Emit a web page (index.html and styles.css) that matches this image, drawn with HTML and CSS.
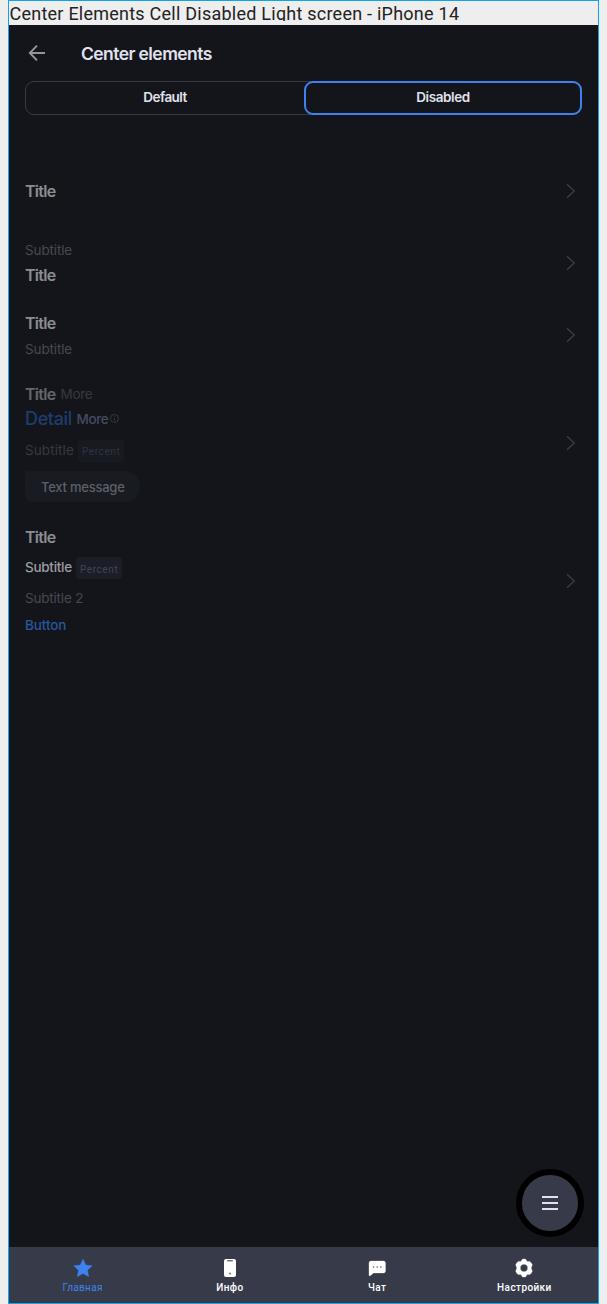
FILE: index.html
```html
<!DOCTYPE html>
<html lang="ru">
<head>
<meta charset="utf-8">
<title>Center elements</title>
<link rel="stylesheet" href="styles.css">
</head>
<body>
<main class="frame">
  <div class="caption">Center Elements Cell Disabled Light screen - iPhone 14</div>
  <section class="screen">
    <header class="header">
      <svg class="back" width="18" height="18" viewBox="0 0 18 18"><path d="M17 9H2M9 1.7 1.8 9 9 16.3"/></svg>
      <h1 class="heading">Center elements</h1>
    </header>
    <nav class="tabs">
      <div class="tab">Default</div>
      <div class="tab tab-active">Disabled</div>
    </nav>
    <div class="cells">
      <article class="cell">
        <div class="body"><div class="line"><span class="title">Title</span></div></div>
        <svg class="chevron" width="10" height="16" viewBox="0 0 10 16"><path d="M1 1.3 8.2 8 1 14.7"/></svg>
      </article>
      <article class="cell">
        <div class="body"><div class="line line-over"><span class="subtitle">Subtitle</span></div><div class="line"><span class="title">Title</span></div></div>
        <svg class="chevron" width="10" height="16" viewBox="0 0 10 16"><path d="M1 1.3 8.2 8 1 14.7"/></svg>
      </article>
      <article class="cell">
        <div class="body"><div class="line"><span class="title">Title</span></div><div class="line line-sub"><span class="subtitle">Subtitle</span></div></div>
        <svg class="chevron" width="10" height="16" viewBox="0 0 10 16"><path d="M1 1.3 8.2 8 1 14.7"/></svg>
      </article>
      <article class="cell cell-rich">
        <div class="body">
          <div class="line line-top"><span class="title title-dim">Title</span><span class="more">More</span></div>
          <div class="line line-detail"><span class="detail">Detail</span><span class="detail-more">More</span><svg class="info" width="9" height="9" viewBox="0 0 9 9"><circle cx="4.5" cy="4.5" r="4"/><path d="M4.5 4v2.7M4.5 2.3v.8"/></svg></div>
          <div class="line line-percent"><span class="subtitle subtitle-dim">Subtitle</span><span class="percent percent-dim">Percent</span></div>
          <div class="message">Text message</div>
        </div>
        <svg class="chevron" width="10" height="16" viewBox="0 0 10 16"><path d="M1 1.3 8.2 8 1 14.7"/></svg>
      </article>
      <article class="cell cell-button">
        <div class="body">
          <div class="line line-title"><span class="title">Title</span></div>
          <div class="line line-strong"><span class="subtitle subtitle-strong">Subtitle</span><span class="percent">Percent</span></div>
          <div class="line"><span class="subtitle subtitle-second">Subtitle 2</span></div>
          <div class="line line-action"><span class="action">Button</span></div>
        </div>
        <svg class="chevron" width="10" height="16" viewBox="0 0 10 16"><path d="M1 1.3 8.2 8 1 14.7"/></svg>
      </article>
    </div>
  </section>
  <nav class="bottom">
    <div class="item item-active">
      <svg class="icon" width="20" height="20" viewBox="0 0 20 20"><path d="M10 1 12.8 7 19.3 7.7 14.5 12.2 15.8 18.8 10 15.5 4.2 18.8 5.5 12.2.7 7.7 7.2 7Z"/></svg>
      <span>Главная</span>
    </div>
    <div class="item">
      <svg class="icon" width="20" height="20" viewBox="0 0 20 20"><rect x="4" y="1" width="12" height="18" rx="2"/><path class="cut" d="M7.2 2.8h5.6M9 15.5h2"/></svg>
      <span>Инфо</span>
    </div>
    <div class="item">
      <svg class="icon" width="20" height="20" viewBox="0 0 20 20"><path d="M4 3H16.5a2 2 0 0 1 2 2V13a2 2 0 0 1-2 2H6.5L3.6 17.6Q2 18.5 2 16.8V5a2 2 0 0 1 2-2Z"/><path class="cut" d="M5.9 9h1.4M9.5 9h1.4M13.1 9h1.4"/></svg>
      <span>Чат</span>
    </div>
    <div class="item">
      <svg class="icon" width="20" height="20" viewBox="0 0 20 20"><path fill-rule="evenodd" d="M8.2 1.3Q10 .5 11.8 1.3L13 3.4 15.7 3.4Q17.7 4.5 18.3 6.7L17.2 10 18.3 13.3Q17.7 15.5 15.7 16.6L13 16.6 11.8 18.7Q10 19.5 8.2 18.7L7 16.6 4.3 16.6Q2.3 15.5 1.7 13.3L2.8 10 1.7 6.7Q2.3 4.5 4.3 3.4L7 3.4ZM10 6.3a3.7 3.7 0 1 0 0 7.4a3.7 3.7 0 1 0 0-7.4Z"/></svg>
      <span>Настройки</span>
    </div>
  </nav>
  <div class="fab"><svg width="16" height="16" viewBox="0 0 16 16"><path d="M0 2h16M0 8h16M0 14h16"/></svg></div>
</main>
</body>
</html>
```

FILE: styles.css
```css
* { box-sizing: border-box; }
body { margin: 0; background: #eee; font-family: Inter, sans-serif; }
.frame { position: relative; display: flex; flex-direction: column; width: 591px; height: 1304px; margin-left: 8px; border: 1px solid #0da5f2; }
.caption { height: 20px; margin-bottom: 4px; padding-left: .5px; overflow: hidden; color: #222; font: 18px/26px Roboto, sans-serif; letter-spacing: .24px; white-space: nowrap; }
.screen { flex: 1; padding: 0 16px; background: #14151a; }
.header { display: flex; align-items: center; height: 56px; padding-left: 3px; gap: 35px; }
.back { fill: none; stroke: #9395a0; stroke-width: 1.9; }
.heading { margin: 0; padding-top: 2px; color: #e0e3ed; font-size: 17.5px; line-height: 24px; font-weight: 600; letter-spacing: -.58px; }
.tabs { display: grid; grid-template-columns: 278px 1fr; height: 34px; border: 1px solid #373947; border-radius: 9px; }
.tab { display: flex; align-items: center; justify-content: center; padding-bottom: 3px; color: #e0e3ed; font-size: 13.5px; font-weight: 600; letter-spacing: -.55px; }
.tab-active { margin: -1px -1px -1px 0; border: 2px solid #3d82f0; border-radius: 9px; padding-bottom: 2px; letter-spacing: -.4px; }
.cells { padding-top: 40px; }
.cell { display: flex; justify-content: space-between; align-items: center; height: 72px; padding-right: 6px; }
.cell-rich { height: 144px; }
.cell-button { height: 132px; }
.line { display: flex; align-items: center; height: 24px; white-space: nowrap; }
.line-over { padding-bottom: 2px; }
.line-sub { padding-top: 4px; }
.title { color: #8b8d92; font-size: 16px; line-height: 24px; font-weight: 600; letter-spacing: -.7px; }
.title-dim { color: #64666c; }
.subtitle { color: #464951; font-size: 13.5px; line-height: 20px; letter-spacing: -.13px; }
.subtitle-dim { color: #363941; letter-spacing: .1px; }
.subtitle-strong { color: #9b9da2; font-weight: 500; letter-spacing: -.28px; }
.subtitle-second { letter-spacing: -.2px; }
.more { margin-left: 5px; color: #363941; font-size: 13.5px; letter-spacing: -.3px; }
.line-top { padding-bottom: 1px; }
.detail { color: #1d3d70; font-size: 18px; font-weight: 500; letter-spacing: -.35px; }
.line-detail { padding-bottom: 1px; }
.detail-more { margin-left: 4.5px; padding-top: 2px; color: #424c62; font-size: 13.5px; font-weight: 500; letter-spacing: -.4px; }
.info { margin-left: 2px; fill: none; stroke: #42454d; stroke-width: .7; }
.cell-rich .body { padding-bottom: 2px; }
.line-percent { height: 40px; }
.line-percent .subtitle { padding-bottom: 1px; }
.percent { display: flex; align-items: center; height: 22px; margin-left: 4px; padding: 1px 4px 0; border-radius: 4px; background: #1b1d27; color: #424553; font: 10px Roboto, sans-serif; letter-spacing: .6px; }
.percent-dim { background: #181a22; color: #30343f; }
.message { display: flex; align-items: center; width: 115px; height: 31px; padding: 1px 0 0 16px; border-radius: 2px 16px 16px 8px; background: #181b22; color: #5e6066; font-size: 13px; font-weight: 500; letter-spacing: -.24px; white-space: nowrap; }
.cell-button .body { padding-top: 2px; }
.line-title { padding-top: 2px; }
.line-strong { height: 38px; }
.line-strong .percent { margin-top: 2px; padding-top: 2px; }
.line-action { height: 30px; }
.action { color: #28579f; font-size: 13.5px; font-weight: 500; letter-spacing: -.1px; }
.chevron { fill: none; stroke: #3e4047; stroke-width: 1.2; }
.bottom { display: flex; height: 56px; background: #373a49; }
.item { flex: 1; display: flex; flex-direction: column; align-items: center; padding-top: 11px; color: #fff; font: 500 10px/20px Roboto, sans-serif; letter-spacing: .4px; }
.item-active { color: #3d82f0; }
.item-active span { font-weight: 400; letter-spacing: .3px; }
.icon { fill: currentColor; stroke: none; }
.icon path { stroke: currentColor; stroke-width: .3; }
.icon .cut { fill: none; stroke: #737583; stroke-width: 1.5; }
.fab { position: absolute; right: 14px; bottom: 66px; display: flex; align-items: center; justify-content: center; width: 68px; height: 68px; border: 6px solid #000; border-radius: 50%; background: #373a49; }
.fab svg { stroke: #e0e3ed; stroke-width: 2; }
```
